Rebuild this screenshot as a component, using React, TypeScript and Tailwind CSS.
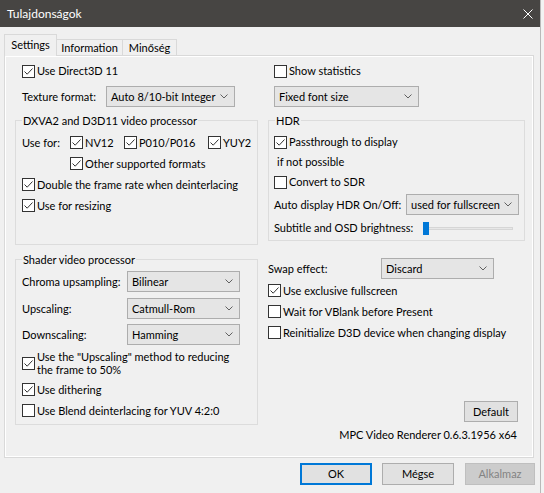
import React from 'react';

const Check = ({ checked }: { checked?: boolean }) => (
  <span className="w-[13px] h-[13px] border border-[#333333] bg-white flex items-center justify-center shrink-0">
    {checked && (
      <svg width="11" height="11" viewBox="0 0 11 11">
        <path d="M1.5 5.5 L4.2 8.2 L9.5 2.5" fill="none" stroke="#333333" strokeWidth="1" />
      </svg>
    )}
  </span>
);

const CheckRow = ({ checked, label, className = '' }: { checked?: boolean; label: React.ReactNode; className?: string }) => (
  <div className={`flex items-center gap-[2px] ${className}`}>
    <Check checked={checked} />
    <span className="whitespace-nowrap">{label}</span>
  </div>
);

const Select = ({ value, className = '' }: { value: string; className?: string }) => (
  <div className={`h-[21px] bg-[#e5e5e5] border border-[#adadad] flex items-center justify-between pl-[4px] pr-[6px] ${className}`}>
    <span className="whitespace-nowrap">{value}</span>
    <svg width="8" height="5" viewBox="0 0 8 5">
      <path d="M0.5 0.5 L4 4 L7.5 0.5" fill="none" stroke="#606060" strokeWidth="1" />
    </svg>
  </div>
);

const Group = ({ title, className = '', children }: { title: string; className?: string; children: React.ReactNode }) => (
  <fieldset className={`border border-[#dcdcdc] ${className}`}>
    <legend className="ml-[6px] px-[1px] leading-[16px] relative top-[1px]">{title}</legend>
    {children}
  </fieldset>
);

export default function App() {
  return (
    <div className="w-[544px] h-[493px] bg-[#f3f3f3] overflow-hidden">
      <div className="w-[541px] h-[493px] bg-[#f0f0f0] border-r border-[#b9b9b9] text-[11px] leading-[16px] text-black font-['Lato','Liberation_Sans',sans-serif] flex flex-col">
        {/* title bar */}
        <div className="h-[27px] bg-[#474543] flex items-center justify-between pl-[7px] pr-[7px] text-white text-[12px] shrink-0">
          <span>Tulajdonságok</span>
          <svg width="10" height="10" viewBox="0 0 10 10">
            <path d="M0.5 0.5 L9.5 9.5 M9.5 0.5 L0.5 9.5" stroke="#ffffff" strokeWidth="1" />
          </svg>
        </div>

        <div className="flex flex-col pl-[4px]">
          {/* tabs */}
          <div className="flex items-end h-[21px] mt-[7px] relative z-10">
            <div className="w-[53px] h-[22px] border border-b-0 border-[#d9d9d9] bg-[#f0f0f0] flex items-center justify-center relative top-[1px] pb-[2px]">
              Settings
            </div>
            <div className="w-[66px] h-[16px] border border-l-0 border-b-0 border-[#d9d9d9] flex items-center justify-center">
              Information
            </div>
            <div className="w-[54px] h-[16px] border border-l-0 border-b-0 border-[#d9d9d9] flex items-center justify-center">
              Minőség
            </div>
          </div>

          {/* panel */}
          <div className="w-[530px] h-[403px] border border-[#d9d9d9] shadow-[inset_0_0_0_1px_#ffffff] flex gap-[10px] pl-[10px]">
            {/* left column */}
            <div className="w-[243px] flex flex-col">
              <CheckRow checked label="Use Direct3D 11" className="h-[20px] mt-[5px] pl-[7px]" />
              <div className="h-[21px] mt-[5px] pl-[7px] flex items-center">
                <span className="w-[84px] whitespace-nowrap">Texture format:</span>
                <Select value="Auto 8/10-bit Integer" className="w-[129px]" />
              </div>

              <Group title="DXVA2 and D3D11 video processor" className="h-[133px] mt-[5px]">
                <div className="flex flex-col pl-[6px] pt-[4px]">
                  <div className="h-[21px] flex items-center">
                    <span className="w-[48px]">Use for:</span>
                    <CheckRow checked label="NV12" className="w-[54px]" />
                    <CheckRow checked label="P010/P016" className="w-[84px]" />
                    <CheckRow checked label="YUY2" />
                  </div>
                  <CheckRow checked label="Other supported formats" className="h-[21px] pl-[48px]" />
                  <CheckRow checked label="Double the frame rate when deinterlacing" className="h-[21px]" />
                  <CheckRow checked label="Use for resizing" className="h-[21px]" />
                </div>
              </Group>

              <Group title="Shader video processor" className="h-[174px] mt-[6px]">
                <div className="flex flex-col pl-[6px] pr-[17px] pt-[4px]">
                  <div className="h-[21px] flex items-center">
                    <span className="w-[105px] whitespace-nowrap">Chroma upsampling:</span>
                    <Select value="Bilinear" className="flex-1" />
                  </div>
                  <div className="h-[21px] mt-[6px] flex items-center">
                    <span className="w-[105px]">Upscaling:</span>
                    <Select value="Catmull-Rom" className="flex-1" />
                  </div>
                  <div className="h-[21px] mt-[5px] flex items-center">
                    <span className="w-[105px]">Downscaling:</span>
                    <Select value="Hamming" className="flex-1" />
                  </div>
                  <div className="mt-[5px] flex items-center gap-[2px]">
                    <Check checked />
                    <span className="leading-[13px] whitespace-nowrap">
                      Use the &quot;Upscaling&quot; method to reducing
                      <br />
                      the frame to 50%
                    </span>
                  </div>
                  <CheckRow checked label="Use dithering" className="h-[21px] mt-[3px]" />
                  <CheckRow label="Use Blend deinterlacing for YUV 4:2:0" className="h-[21px]" />
                </div>
              </Group>
            </div>

            {/* right column */}
            <div className="w-[257px] flex flex-col">
              <CheckRow label="Show statistics" className="h-[20px] mt-[5px] pl-[6px]" />
              <div className="h-[21px] mt-[5px] pl-[6px] flex">
                <Select value="Fixed font size" className="w-[145px]" />
              </div>

              <Group title="HDR" className="h-[129px] mt-[5px]">
                <div className="flex flex-col pl-[5px] pt-[4px]">
                  <CheckRow checked label="Passthrough to display" className="h-[20px]" />
                  <div className="h-[20px] flex items-center pl-[3px]">if not possible</div>
                  <CheckRow label="Convert to SDR" className="h-[20px]" />
                  <div className="h-[21px] mt-[2px] flex items-center">
                    <span className="w-[132px] whitespace-nowrap">Auto display HDR On/Off:</span>
                    <Select value="used for fullscreen" className="w-[113px]" />
                  </div>
                  <div className="h-[20px] mt-[3px] flex items-center">
                    <span className="w-[149px] whitespace-nowrap">Subtitle and OSD brightness:</span>
                    <div className="relative w-[90px] h-[13px] flex items-center">
                      <div className="w-full h-[3px] bg-[#e7e7e7] border border-[#d6d6d6]" />
                      <div className="absolute left-0 top-0 w-[6px] h-[13px] bg-[#0078d7]" />
                    </div>
                  </div>
                </div>
              </Group>

              <div className="h-[21px] mt-[17px] flex items-center">
                <span className="w-[113px]">Swap effect:</span>
                <Select value="Discard" className="w-[113px]" />
              </div>
              <CheckRow checked label="Use exclusive fullscreen" className="h-[21px] mt-[1px]" />
              <CheckRow label="Wait for VBlank before Present" className="h-[21px]" />
              <CheckRow label="Reinitialize D3D device when changing display" className="h-[21px]" />

              <div className="flex justify-end mt-[58px] pr-[7px]">
                <div className="w-[54px] h-[21px] bg-[#e1e1e1] border border-[#adadad] flex items-center justify-center">
                  Default
                </div>
              </div>
              <div className="h-[20px] mt-[3px] pr-[8px] flex items-center justify-end whitespace-nowrap">
                MPC Video Renderer 0.6.3.1956 x64
              </div>
            </div>
          </div>

          {/* dialog buttons */}
          <div className="w-[531px] flex justify-end mt-[5px] gap-[10px]">
            <div className="w-[72px] h-[22px] bg-[#e1e1e1] border-2 border-[#0078d7] flex items-center justify-center">OK</div>
            <div className="w-[72px] h-[22px] bg-[#e1e1e1] border border-[#adadad] flex items-center justify-center">Mégse</div>
            <div className="w-[70px] h-[22px] ml-[1px] bg-[#cccccc] border border-[#bfbfbf] text-[#838383] flex items-center justify-center">Alkalmaz</div>
          </div>
        </div>
      </div>
    </div>
  );
}
